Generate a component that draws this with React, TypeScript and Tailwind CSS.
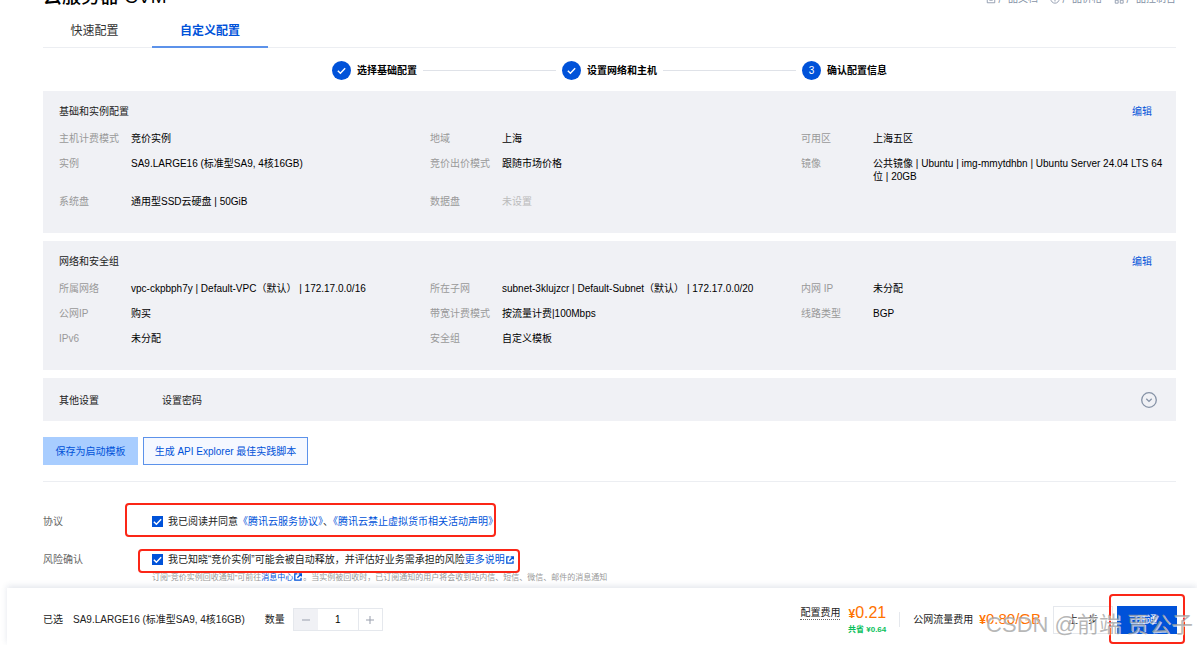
import React, { useState } from 'react';
import clsx from 'clsx';

type Field = { label: string; value: string; muted?: boolean };

const STEPS = ['选择基础配置', '设置网络和主机', '确认配置信息'];

const BASIC_FIELDS: Field[] = [
  { label: '主机计费模式', value: '竞价实例' },
  { label: '地域', value: '上海' },
  { label: '可用区', value: '上海五区' },
  { label: '实例', value: 'SA9.LARGE16 (标准型SA9, 4核16GB)' },
  { label: '竞价出价模式', value: '跟随市场价格' },
  { label: '镜像', value: '公共镜像 | Ubuntu | img-mmytdhbn | Ubuntu Server 24.04 LTS 64位 | 20GB' },
  { label: '系统盘', value: '通用型SSD云硬盘 | 50GiB' },
  { label: '数据盘', value: '未设置', muted: true },
];

const NETWORK_FIELDS: Field[] = [
  { label: '所属网络', value: 'vpc-ckpbph7y | Default-VPC（默认） | 172.17.0.0/16' },
  { label: '所在子网', value: 'subnet-3klujzcr | Default-Subnet（默认） | 172.17.0.0/20' },
  { label: '内网 IP', value: '未分配' },
  { label: '公网IP', value: '购买' },
  { label: '带宽计费模式', value: '按流量计费|100Mbps' },
  { label: '线路类型', value: 'BGP' },
  { label: 'IPv6', value: '未分配' },
  { label: '安全组', value: '自定义模板' },
];

const CheckMark: React.FC<{ className: string }> = ({ className }) => (
  <svg viewBox="0 0 12 12" className={className} fill="none" stroke="white" strokeWidth="1.6" aria-hidden="true">
    <path d="M2 6.2l2.8 2.7L10 3.6" />
  </svg>
);

const ExternalIcon: React.FC = () => (
  <svg viewBox="0 0 10 10" className="mx-px inline-block size-2 align-[-1px]" fill="none" stroke="currentColor" strokeWidth="1.6" aria-hidden="true">
    <path d="M4.2 1.2H1v7.8h7.8V5.8M5.8 1h3.4v3.4M9 1.2L4.2 6" />
  </svg>
);

const ConfigCard: React.FC<{ title: string; fields: Field[] }> = ({ title, fields }) => (
  <section className="mb-2 bg-[#f0f1f5] px-4 pt-3.5 pb-[25px]">
    <div className="mb-3.5 flex justify-between pr-2">
      <h2>{title}</h2>
      <a href="#edit" className="text-[#0052d9]">编辑</a>
    </div>
    <dl className="-mr-2 grid grid-cols-3 gap-x-1 gap-y-3">
      {fields.map((f) => (
        <div key={f.label} className="flex">
          <dt className="w-[72px] shrink-0 text-[#999]">{f.label}</dt>
          <dd className={f.muted ? 'text-[#bbb]' : 'text-black'}>{f.value}</dd>
        </div>
      ))}
    </dl>
  </section>
);

const CheckBox: React.FC<{ id: string }> = ({ id }) => {
  const [checked, setChecked] = useState(true);
  return (
    <span className="mr-[5px] grid size-[11px] shrink-0">
      <input
        id={id}
        type="checkbox"
        checked={checked}
        onChange={(e) => setChecked(e.target.checked)}
        className="col-start-1 row-start-1 size-[11px] appearance-none border border-[#0052d9] checked:bg-[#0052d9]"
      />
      {checked && <CheckMark className="pointer-events-none col-start-1 row-start-1 size-[11px]" />}
    </span>
  );
};

const App: React.FC = () => {
  const [tab, setTab] = useState(1);
  const [count, setCount] = useState(1);

  return (
    <div className="relative flex min-h-screen flex-col overflow-hidden bg-white font-['Liberation_Sans','Noto_Sans_CJK_SC',sans-serif] text-[10px] leading-[13px] text-[#222]">
      <div className="pr-[21px] pl-[43px]">
        <header className="flex h-2 items-end justify-between overflow-hidden">
          <h1 className="mb-px shrink-0 text-[19px] leading-5 font-medium text-black">云服务器 CVM</h1>
          <nav className="mb-[3px] flex shrink-0 gap-3 text-[#8592a6]">
            <a href="#docs" className="flex items-center gap-0.5">
              <svg viewBox="0 0 12 12" className="size-2.5" fill="none" stroke="currentColor" aria-hidden="true">
                <path d="M1.5 1.5h9v9h-9zM4 5h4M4 7.5h4" />
              </svg>
              产品文档
            </a>
            <a href="#price" className="flex items-center gap-0.5">
              <svg viewBox="0 0 12 12" className="size-2.5" fill="none" stroke="currentColor" aria-hidden="true">
                <circle cx="6" cy="6" r="5" />
                <path d="M4 3l2 2.5L8 3M6 5.5V9M4 6.5h4" />
              </svg>
              产品价格
            </a>
            <a href="#console" className="flex items-center gap-0.5">
              <svg viewBox="0 0 12 12" className="size-2.5" fill="none" stroke="currentColor" aria-hidden="true">
                <path d="M1.5 1.5h3.5v3.5h-3.5zM7.5 1.5h3.5v3.5h-3.5zM1.5 7.5h3.5v3.5h-3.5zM7.5 7.5h3.5v3.5h-3.5z" />
              </svg>
              产品控制台
            </a>
          </nav>
        </header>

        <div role="tablist" className="flex h-10 border-b border-[#eceef2] text-xs">
          {['快速配置', '自定义配置'].map((name, i) => (
            <button
              key={name}
              type="button"
              role="tab"
              aria-selected={tab === i}
              onClick={() => setTab(i)}
              className={clsx(
                '-mb-px border-b-2 pt-2',
                i === 0 ? 'mr-1.5 w-[103px]' : 'w-[116px]',
                tab === i ? 'border-[#5c92ea] font-bold text-[#0052d9]' : 'border-transparent text-[#333]'
              )}
            >
              {name}
            </button>
          ))}
        </div>

        <ol className="flex h-[43px] items-center justify-center pt-px">
          {STEPS.map((step, i) => (
            <li key={step} className="flex items-center font-bold text-black">
              <span className="mr-1.5 flex size-[19px] items-center justify-center rounded-full bg-[#0052d9] font-normal text-white">
                {i < 2 ? <CheckMark className="size-[11px]" /> : i + 1}
              </span>
              {step}
              {i < 2 && <span className="mx-1.5 h-px w-[133px] bg-[#dfe2e8]" />}
            </li>
          ))}
        </ol>

        <ConfigCard title="基础和实例配置" fields={BASIC_FIELDS} />
        <ConfigCard title="网络和安全组" fields={NETWORK_FIELDS} />

        <section className="flex h-[43px] items-center bg-[#f0f1f5] pt-px pr-[19px] pl-4">
          <h2 className="w-[103px]">其他设置</h2>
          <span>设置密码</span>
          <button type="button" aria-label="展开" className="ml-auto text-[#8592a6]">
            <svg viewBox="0 0 16 16" className="size-4" fill="none" stroke="currentColor" strokeWidth="1.3">
              <circle cx="8" cy="8" r="7.3" />
              <path d="M5.3 6.8L8 9.4l2.7-2.6" />
            </svg>
          </button>
        </section>

        <div className="flex gap-[5px] border-b border-[#eceef2] py-4">
          <button type="button" className="h-7 w-[95px] bg-[#a8cdff] text-[#0052d9]">保存为启动模板</button>
          <button type="button" className="h-7 w-[165px] border border-[#5c92ea] bg-[#f5f8ff] text-[#0052d9]">
            生成 API Explorer 最佳实践脚本
          </button>
        </div>

        <div className="flex items-center pt-[21px]">
          <span className="w-[82px] shrink-0 pt-0.5 text-[#666]">协议</span>
          <div className="flex h-[34px] items-center rounded-sm border-2 border-[#fb2617] pt-0.5 pl-[25px] whitespace-nowrap">
            <CheckBox id="agreement" />
            <label htmlFor="agreement" className="-mr-1">
              我已阅读并同意
              <a href="#terms" className="text-[#0052d9]">《腾讯云服务协议》</a>、
              <a href="#statement" className="text-[#0052d9]">《腾讯云禁止虚拟货币相关活动声明》</a>
            </label>
          </div>
        </div>

        <div className="flex items-center pt-3">
          <span className="w-[95px] shrink-0 pb-1 text-[#666]">风险确认</span>
          <div className="flex h-6 items-center rounded-sm border-2 border-[#fb2617] pr-[3px] pb-1 pl-3 whitespace-nowrap">
            <CheckBox id="risk" />
            <label htmlFor="risk">
              我已知晓“竞价实例”可能会被自动释放，并评估好业务需承担的风险
              <a href="#more" className="text-[#0052d9]">更多说明<ExternalIcon /></a>
            </label>
          </div>
        </div>
        <p className="pb-[5px] pl-[109px] text-[8px] leading-[10px] text-[#999]">
          订阅“竞价实例回收通知”可前往
          <a href="#messages" className="text-[#0052d9]">消息中心<ExternalIcon /></a>
          。当实例被回收时，已订阅通知的用户将会收到站内信、短信、微信、邮件的消息通知
        </p>
      </div>

      <footer className="relative ml-[7px] flex min-h-[57px] flex-1 items-center bg-white pt-1.5 pr-5 pl-9 shadow-[0_-2px_6px_rgba(60,80,120,0.14)]">
        <span className="mr-2.5">已选</span>
        <span className="mr-5">SA9.LARGE16 (标准型SA9, 4核16GB)</span>
        <label htmlFor="count" className="mr-2">数量</label>
        <div className="flex h-[23px] border border-[#e5e8ed] text-[#999fad]">
          <button type="button" aria-label="减少" onClick={() => setCount(Math.max(1, count - 1))} className="flex w-6 items-center justify-center bg-[#f0f1f5]">
            <svg viewBox="0 0 8 8" className="size-2" stroke="currentColor"><path d="M0 4h8" /></svg>
          </button>
          <input
            id="count"
            value={count}
            onChange={(e) => setCount(Number(e.target.value) || 1)}
            className="w-10 text-center text-black outline-none"
          />
          <button type="button" aria-label="增加" onClick={() => setCount(count + 1)} className="flex w-6 items-center justify-center border-l border-[#e5e8ed]">
            <svg viewBox="0 0 8 8" className="size-2" stroke="currentColor"><path d="M0 4h8M4 0v8" /></svg>
          </button>
        </div>

        <div className="ml-auto flex flex-col items-end">
          <div className="flex items-center gap-2">
            <span className="border-b border-dotted border-[#666]">配置费用</span>
            <span className="text-base leading-5 text-[#ff7200]"><b className="text-xs">¥</b>0.21</span>
          </div>
          <b className="text-[8px] text-[#0abf5b]">共省 ¥0.64</b>
        </div>
        <div className="mx-[13px] h-[15px] w-px bg-[#e5e8ed]" />
        <span className="mr-1.5">公网流量费用</span>
        <span className="mr-3 text-[15px] text-[#ff7200]"><b className="text-xs">¥</b>0.80/GB</span>
        <button type="button" className="mr-1 h-7 w-[60px] border border-[#e5e8ed]">上一步</button>
        <div className="relative">
          <button type="button" className="h-7 w-[60px] bg-[#0052d9] text-white">开通</button>
          <div className="pointer-events-none absolute -inset-x-2 -top-3 -bottom-2.5 rounded-sm border-2 border-[#fb2617]" />
        </div>
        <div className="pointer-events-none absolute right-1 bottom-1 text-[22px] leading-8 whitespace-nowrap text-[#a0a0a0]/75 [text-shadow:1px_1px_0_rgba(255,255,255,0.7)]">
          CSDN @前端 贾公子
        </div>
      </footer>
    </div>
  );
};

export default App;
